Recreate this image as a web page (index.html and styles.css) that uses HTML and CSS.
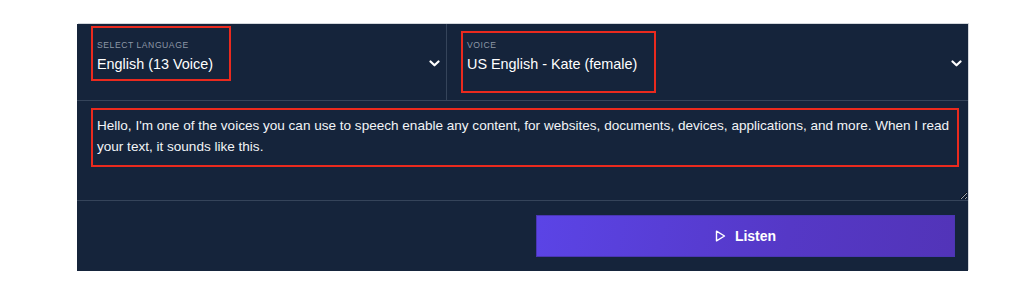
FILE: index.html
```html
<!DOCTYPE html>
<html lang="en">
<head>
    <meta charset="UTF-8">
    <meta name="viewport" content="width=device-width, initial-scale=1.0">
    <title>Text to Speech Demo</title>
    <link rel="stylesheet" href="styles.css">
</head>
<body>
    <section class="tts-panel">
        <div class="selects">
            <div class="field field-language">
                <div class="field-text">
                    <span class="field-label">Select Language</span>
                    <span class="field-value">English (13 Voice)</span>
                </div>
                <svg class="chevron" width="11" height="7" viewBox="0 0 11 7"><polyline points="1.5,1.5 5.5,5.3 9.5,1.5" fill="none" stroke="#fff" stroke-width="2.2" stroke-linecap="round" stroke-linejoin="round"/></svg>
                <span class="mark mark-language"></span>
            </div>
            <div class="field field-voice">
                <div class="field-text">
                    <span class="field-label">Voice</span>
                    <span class="field-value">US English - Kate (female)</span>
                </div>
                <svg class="chevron" width="11" height="7" viewBox="0 0 11 7"><polyline points="1.5,1.5 5.5,5.3 9.5,1.5" fill="none" stroke="#fff" stroke-width="2.2" stroke-linecap="round" stroke-linejoin="round"/></svg>
                <span class="mark mark-voice"></span>
            </div>
        </div>
        <div class="text-wrap">
            <textarea class="tts-text" spellcheck="false">Hello, I'm one of the voices you can use to speech enable any content, for websites, documents, devices, applications, and more. When I read your text, it sounds like this.</textarea>
            <span class="mark mark-text"></span>
        </div>
        <div class="actions">
            <button class="listen-btn" type="button">
                <svg width="11" height="12" viewBox="0 0 11 12"><polygon points="1.5,1.2 9.5,6 1.5,10.8" fill="none" stroke="#fff" stroke-width="1.4" stroke-linejoin="round"/></svg>
                Listen
            </button>
        </div>
    </section>
</body>
</html>
```

FILE: styles.css
```css
* {
    margin: 0;
    padding: 0;
    box-sizing: border-box;
}
body {
    font-family: "Liberation Sans", Arial, sans-serif;
    background-color: #ffffff;
    padding: 24px 0 0 77px;
}
.tts-panel {
    width: 891px;
    background-color: #15243b;
    color: #f2f4f7;
    box-shadow: 1px -1px 0 #d3d7dc;
}
.selects {
    display: grid;
    grid-template-columns: 370px 1fr;
    border-bottom: 1px solid #35445a;
}
.field {
    position: relative;
    height: 76px;
    padding: 16px 6px 0 20px;
    display: flex;
    align-items: flex-start;
    justify-content: space-between;
}
.field-language {
    border-right: 1px solid #35445a;
}
.field-text {
    display: flex;
    flex-direction: column;
}
.field-label {
    font-size: 8.6px;
    line-height: 10px;
    letter-spacing: 0.55px;
    text-transform: uppercase;
    color: #8d97a6;
    margin-bottom: 5px;
}
.field-value {
    font-size: 14.4px;
    line-height: 18px;
    color: #ffffff;
}
.chevron {
    margin-top: 20px;
}
.mark {
    position: absolute;
    border: 2px solid #ea2a1e;
    pointer-events: none;
}
.mark-language {
    left: 14px;
    top: 2px;
    width: 140px;
    height: 55px;
}
.mark-voice {
    left: 14px;
    top: 7px;
    width: 195px;
    height: 62px;
}
.text-wrap {
    position: relative;
    border-bottom: 1px solid #35445a;
}
.tts-text {
    display: block;
    width: 100%;
    height: 99px;
    padding: 14px 12px 14px 20px;
    border: none;
    outline: none;
    background: transparent;
    color: #f2f4f7;
    font-family: "Liberation Sans", Arial, sans-serif;
    font-size: 13.55px;
    line-height: 21px;
    resize: vertical;
}
.mark-text {
    left: 14px;
    top: 7px;
    width: 868px;
    height: 59px;
}
.actions {
    display: flex;
    justify-content: flex-end;
    padding: 14px 13px 14px 0;
}
.listen-btn {
    width: 419px;
    height: 42px;
    display: flex;
    align-items: center;
    justify-content: center;
    gap: 9px;
    border: 1px solid #4a36b4;
    background: linear-gradient(100deg, #5b44e6 0%, #5538c6 60%, #5234b8 100%);
    color: #ffffff;
    font-family: "Liberation Sans", Arial, sans-serif;
    font-size: 14px;
    font-weight: bold;
    cursor: pointer;
}
```
